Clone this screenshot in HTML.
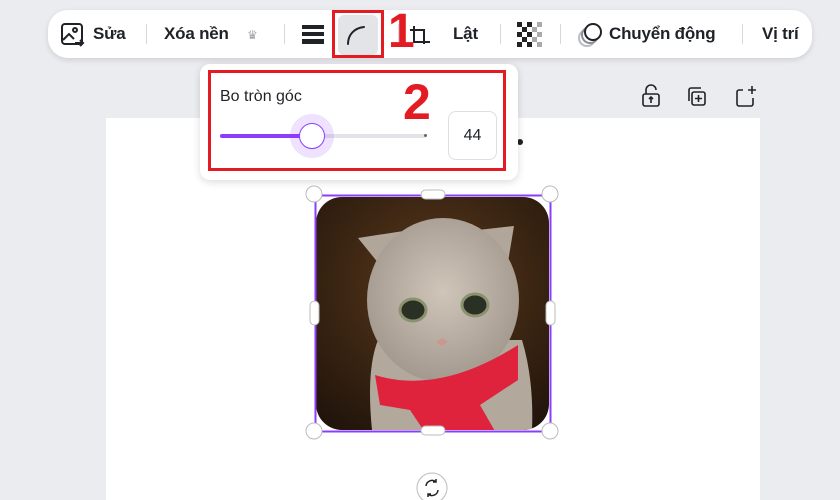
<!DOCTYPE html>
<html><head><meta charset="utf-8"><style>
*{margin:0;padding:0;box-sizing:border-box}
html,body{width:840px;height:500px;overflow:hidden}
body{background:#ebecf0;font-family:"Liberation Sans","DejaVu Sans",sans-serif;position:relative;color:#0e1318}
.abs{position:absolute}
.t{position:absolute;font-size:17px;font-weight:bold;color:#1f2328;top:24px;letter-spacing:-0.2px}
.sep{position:absolute;top:24px;width:1px;height:20px;background:#d6d8dc}
</style></head><body>
<div class="abs" style="left:106px;top:118px;width:654px;height:382px;background:#fff"></div>
<div class="abs" style="left:48px;top:10px;width:764px;height:48px;background:#fff;border-radius:20px;box-shadow:0 2px 6px rgba(0,0,0,.12)"></div>
<svg class="abs" style="left:60px;top:22px" width="26" height="26" viewBox="0 0 26 26" fill="none" stroke="#1f2328" stroke-width="2"><rect x="2" y="2" width="20" height="20" rx="3"/><circle cx="15" cy="8" r="2"/><path d="M3 18l6-6 5 5"/><path d="M15 21h8M20 18l3 3-3 3"/></svg>
<div class="t" style="left:93px">Sửa</div>
<div class="sep" style="left:146px"></div>
<div class="t" style="left:164px">Xóa nền</div>
<div class="abs" style="left:247px;top:28px;font-size:12px;color:#a0a4aa">♛</div>
<div class="sep" style="left:284px"></div>
<div class="abs" style="left:302px;top:25px;width:22px;height:4px;background:#1f2328"></div>
<div class="abs" style="left:302px;top:32px;width:22px;height:4px;background:#1f2328"></div>
<div class="abs" style="left:302px;top:39px;width:22px;height:5px;background:#1f2328"></div>
<div class="abs" style="left:338px;top:15px;width:40px;height:40px;background:#e3e4e7;border-radius:6px"></div>
<svg class="abs" style="left:344px;top:22px" width="28" height="26"><path d="M4 22C4 13 10 6 20 5" fill="none" stroke="#1f2328" stroke-width="2" stroke-linecap="round"/></svg>
<div class="abs" style="left:332px;top:10px;width:52px;height:48px;border:3px solid #e31b23"></div>
<div class="sep" style="left:398px"></div>
<svg class="abs" style="left:408px;top:24px" width="24" height="24" fill="none" stroke="#1f2328" stroke-width="2"><path d="M6 2v16h16M2 6h14v14"/></svg>
<div class="abs" style="left:388px;top:6px;font-size:48px;font-weight:bold;color:#e31b23;line-height:52px">1</div>
<div class="t" style="left:453px">Lật</div>
<div class="sep" style="left:500px"></div>
<svg class="abs" style="left:517px;top:22px" width="25" height="25"><g fill="#222"><rect x="0" y="0" width="5" height="5"/><rect x="10" y="0" width="5" height="5"/><rect x="5" y="5" width="5" height="5"/><rect x="0" y="10" width="5" height="5"/><rect x="10" y="10" width="5" height="5"/><rect x="5" y="15" width="5" height="5"/><rect x="0" y="20" width="5" height="5"/><rect x="10" y="20" width="5" height="5"/></g><g fill="#aaa"><rect x="15" y="5" width="5" height="5"/><rect x="20" y="0" width="5" height="5"/><rect x="15" y="15" width="5" height="5"/><rect x="20" y="10" width="5" height="5"/><rect x="20" y="20" width="5" height="5"/></g></svg>
<div class="sep" style="left:560px"></div>
<svg class="abs" style="left:576px;top:21px" width="28" height="28" fill="none" stroke-width="2"><circle cx="11" cy="17" r="8" stroke="#b8bbc0"/><circle cx="14" cy="14" r="8" stroke="#8a8e94"/><circle cx="17" cy="11" r="8" stroke="#1f2328" fill="#fff"/></svg>
<div class="t" style="left:609px">Chuyển động</div>
<div class="sep" style="left:742px"></div>
<div class="t" style="left:762px">Vị trí</div>
<svg class="abs" style="left:640px;top:84px" width="120" height="26" fill="none" stroke="#1f2328" stroke-width="1.6"><rect x="3" y="10" width="16" height="12" rx="2"/><path d="M6 10V6a5 5 0 0 1 10 0"/><path d="M11 19v-6M9 15l2-2 2 2"/><rect x="52" y="8" width="13" height="13" rx="2"/><path d="M49 17V6a2 2 0 0 1 2-2h10M58.5 11v7M55 14.5h7"/><path d="M103 6h-4a2 2 0 0 0-2 2v12a2 2 0 0 0 2 2h12a2 2 0 0 0 2-2v-6M108 6h8M112 2v8"/></svg>
<div class="abs" style="left:500px;top:124px;width:36px;height:36px;border-radius:50%;background:#fff"></div>
<div class="abs" style="left:517px;top:139px;width:6px;height:6px;border-radius:50%;background:#1f2328"></div>
<div class="abs" style="left:200px;top:64px;width:318px;height:116px;background:#fff;border-radius:10px;box-shadow:0 2px 8px rgba(0,0,0,.15)"></div>
<div class="abs" style="left:208px;top:70px;width:298px;height:101px;border:3px solid #e31b23"></div>
<div class="abs" style="left:220px;top:88px;font-size:16px;color:#1f2328">Bo tròn góc</div>
<div class="abs" style="left:403px;top:74px;font-size:50px;font-weight:bold;color:#e31b23;line-height:56px">2</div>
<div class="abs" style="left:220px;top:134px;width:206px;height:4px;background:#e3e4e7;border-radius:2px"></div>
<div class="abs" style="left:220px;top:134px;width:92px;height:4px;background:#8b3dff;border-radius:2px"></div>
<div class="abs" style="left:424px;top:134px;width:3px;height:3px;background:#666;border-radius:50%"></div>
<div class="abs" style="left:290px;top:114px;width:44px;height:44px;border-radius:50%;background:rgba(139,61,255,.15)"></div>
<div class="abs" style="left:299px;top:123px;width:26px;height:26px;border-radius:50%;background:#fff;border:1.5px solid #8b3dff"></div>
<div class="abs" style="left:448px;top:111px;width:49px;height:49px;border:1px solid #dcdee2;border-radius:8px;font-size:16px;text-align:center;line-height:47px;color:#1f2328">44</div>
<svg class="abs" style="left:300px;top:180px" width="270" height="320">
<defs><radialGradient id="bg" cx="0.5" cy="0.4" r="0.7"><stop offset="0" stop-color="#5a3a1c"/><stop offset="1" stop-color="#1e120a"/></radialGradient>
<radialGradient id="cat" cx="0.5" cy="0.45" r="0.6"><stop offset="0" stop-color="#cfc5b9"/><stop offset="1" stop-color="#a0958a"/></radialGradient>
<clipPath id="c"><rect x="16" y="17" width="233" height="233" rx="26"/></clipPath></defs>
<g clip-path="url(#c)"><rect x="0" y="0" width="270" height="260" fill="url(#bg)"/>
<path d="M72 250 Q66 190 78 160 L222 160 Q234 200 232 250 Z" fill="#b3a89c"/>
<path d="M58 58 L110 50 L92 100 Z M214 46 L160 52 L205 100 Z" fill="#b0a69a"/>
<ellipse cx="143" cy="120" rx="76" ry="82" fill="url(#cat)"/>
<ellipse cx="113" cy="130" rx="13" ry="11" fill="#2b3024" stroke="#8a9270" stroke-width="3"/>
<ellipse cx="175" cy="125" rx="13" ry="11" fill="#2b3024" stroke="#8a9270" stroke-width="3"/>
<path d="M142 158 l6 4 -6 4 -6-4z" fill="#c9988e"/>
<path d="M75 195 Q140 215 218 165 L218 200 L180 225 L200 260 L130 260 L110 230 L80 225 Z" fill="#e0233c"/>
</g>
<rect x="15.5" y="15.5" width="235" height="236" fill="none" stroke="#8b3dff" stroke-width="2"/>
<g fill="#fff" stroke="#bbb"><circle cx="14" cy="14" r="8"/><circle cx="250" cy="14" r="8"/><circle cx="14" cy="251" r="8"/><circle cx="250" cy="251" r="8"/>
<rect x="121" y="10" width="24" height="9" rx="4.5"/><rect x="121" y="246" width="24" height="9" rx="4.5"/><rect x="10" y="121" width="9" height="24" rx="4.5"/><rect x="246" y="121" width="9" height="24" rx="4.5"/>
<circle cx="132" cy="308" r="15"/></g>
<path d="M126 306a6 6 0 0 1 10-4M138 310a6 6 0 0 1-10 4M136 299v3h-3M128 317v-3h3" fill="none" stroke="#1f2328" stroke-width="1.5"/>
</svg>
</body></html>
